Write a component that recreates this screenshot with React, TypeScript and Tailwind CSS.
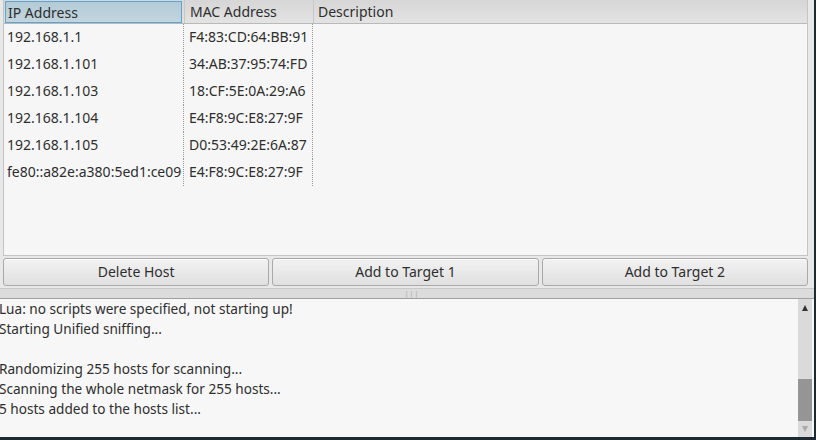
import React from 'react';

interface Host {
  ip: string;
  mac: string;
}

const hosts: Host[] = [
  { ip: '192.168.1.1', mac: 'F4:83:CD:64:BB:91' },
  { ip: '192.168.1.101', mac: '34:AB:37:95:74:FD' },
  { ip: '192.168.1.103', mac: '18:CF:5E:0A:29:A6' },
  { ip: '192.168.1.104', mac: 'E4:F8:9C:E8:27:9F' },
  { ip: '192.168.1.105', mac: 'D0:53:49:2E:6A:87' },
  { ip: 'fe80::a82e:a380:5ed1:ce09', mac: 'E4:F8:9C:E8:27:9F' },
];

const logLines = [
  'Lua: no scripts were specified, not starting up!',
  'Starting Unified sniffing...',
  '',
  'Randomizing 255 hosts for scanning...',
  'Scanning the whole netmask for 255 hosts...',
  '5 hosts added to the hosts list...',
];

const buttons = ['Delete Host', 'Add to Target 1', 'Add to Target 2'];

const App: React.FC = () => {
  return (
    <div className="w-[816px] h-[440px] bg-[#1e2a31] overflow-hidden font-['Noto_Sans',sans-serif] text-[14px] text-[#2e2e2e]">
      <div className="w-[814px] h-[437px] bg-[#e8e8e8] flex flex-col">
        {/* host list */}
        <div className="h-[288px] flex flex-col px-[3px] pr-[6px]">
          <div className="h-[256px] flex flex-col bg-[#f6f6f6] border border-t-0 border-[#c4c4c4]">
            <div className="h-[24px] flex bg-gradient-to-b from-[#d6d6d6] to-[#e3e3e3] border-b border-[#b9b9b9]">
              <div className="w-[177px] h-[22px] mt-px ml-px flex items-center pl-[2px] bg-gradient-to-b from-[#b3cbd8] to-[#c3d5de] border border-[#5ea4d0]">
                IP Address
              </div>
              <div className="w-[129px] flex items-center pl-[5px] border-l border-[#c8c8c8] ml-[2px]">
                MAC Address
              </div>
              <div className="flex-1 flex items-center pl-[4px] border-l border-[#c8c8c8]">
                Description
              </div>
            </div>
            <div className="flex flex-col">
              {hosts.map((h, i) => (
                <div key={i} className="h-[27px] flex">
                  <div className="w-[179px] pl-[3px] pb-[3px] whitespace-nowrap flex items-center">{h.ip}</div>
                  <div className="w-[130px] h-full flex items-center pl-[5px] pb-[3px] border-l border-r border-dotted border-[#9a9a9a]">
                    {h.mac}
                  </div>
                </div>
              ))}
            </div>
          </div>
          <div className="flex gap-[3px] mt-[2px]">
            {buttons.map((b) => (
              <button
                key={b}
                className="flex-1 h-[28px] pb-px rounded-[3px] border border-[#a9a9a9] bg-gradient-to-b from-[#f2f2f2] to-[#e0e0e0] text-[14px] text-[#2e2e2e] shadow-[inset_0_1px_0_#fafafa]"
              >
                {b}
              </button>
            ))}
          </div>
        </div>

        {/* pane handle */}
        <div className="h-[10px] flex justify-center items-center border-t border-[#c8c8c8] bg-[#dcdcdc]">
          <span className="text-[7px] leading-none text-[#a8a8a8] tracking-[1px] ml-[10px]">|||</span>
        </div>

        {/* log */}
        <div className="flex-1 flex border-t border-[#a0a0a0] bg-[#f7f7f7]">
          <div className="flex-1 overflow-hidden text-[13.6px]">
            {logLines.map((l, i) => (
              <div key={i} className="h-[20px] leading-[20px] whitespace-nowrap -ml-[1px]">
                {l}
              </div>
            ))}
          </div>
          <div className="w-[14px] mr-[2px] bg-[#dadada] flex flex-col items-center">
            <svg width="8" height="8" viewBox="0 0 8 8" className="mt-[5px]">
              <path d="M4 1 L7 7 L1 7 Z" fill="#333" />
            </svg>
            <div className="flex-1" />
            <div className="w-[14px] h-[42px] bg-[#959595]" />
            <svg width="8" height="8" viewBox="0 0 8 8" className="my-[4px]">
              <path d="M1 1 L7 1 L4 7 Z" fill="#aaa" />
            </svg>
          </div>
        </div>
      </div>
    </div>
  );
};

export default App;
